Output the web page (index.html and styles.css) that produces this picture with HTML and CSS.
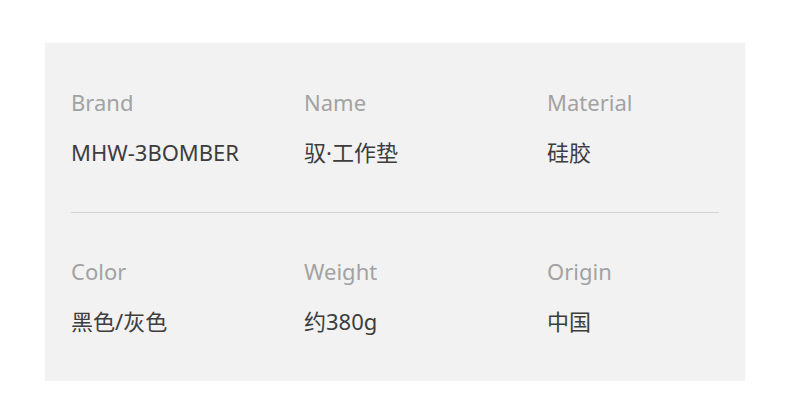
FILE: index.html
```html
<!DOCTYPE html>
<html lang="zh">
<head>
<meta charset="utf-8">
<link rel="stylesheet" href="styles.css">
</head>
<body>
<div class="card">
  <div class="row">
    <div class="cell"><div class="label">Brand</div><div class="value">MHW-3BOMBER</div></div>
    <div class="cell"><div class="label">Name</div><div class="value">驭·工作垫</div></div>
    <div class="cell"><div class="label">Material</div><div class="value">硅胶</div></div>
  </div>
  <div class="divider"></div>
  <div class="row">
    <div class="cell"><div class="label">Color</div><div class="value">黑色/灰色</div></div>
    <div class="cell"><div class="label">Weight</div><div class="value">约380g</div></div>
    <div class="cell"><div class="label">Origin</div><div class="value">中国</div></div>
  </div>
</div>
</body>
</html>
```
FILE: styles.css
```css
html, body {
  margin: 0;
  padding: 0;
  background: #ffffff;
}
body {
  font-family: "Noto Sans", "Noto Sans CJK SC", sans-serif;
}
.card {
  margin: 43px 0 0 45px;
  width: 700px;
  box-sizing: border-box;
  padding: 44px 26px 45px;
  background: #f2f2f2;
  box-shadow: 0 0 3px rgba(0, 0, 0, 0.04);
}
.row {
  display: grid;
  grid-template-columns: 233px 243px 1fr;
}
.cell {
  display: flex;
  flex-direction: column;
  gap: 20px;
}
.label {
  font-size: 22px;
  line-height: 30px;
  color: #a2a2a2;
}
.value {
  font-size: 22px;
  line-height: 30px;
  color: #3d3d3d;
}
.divider {
  height: 1px;
  background: #d3d3d3;
  margin: 45px 0 43px;
}
```
